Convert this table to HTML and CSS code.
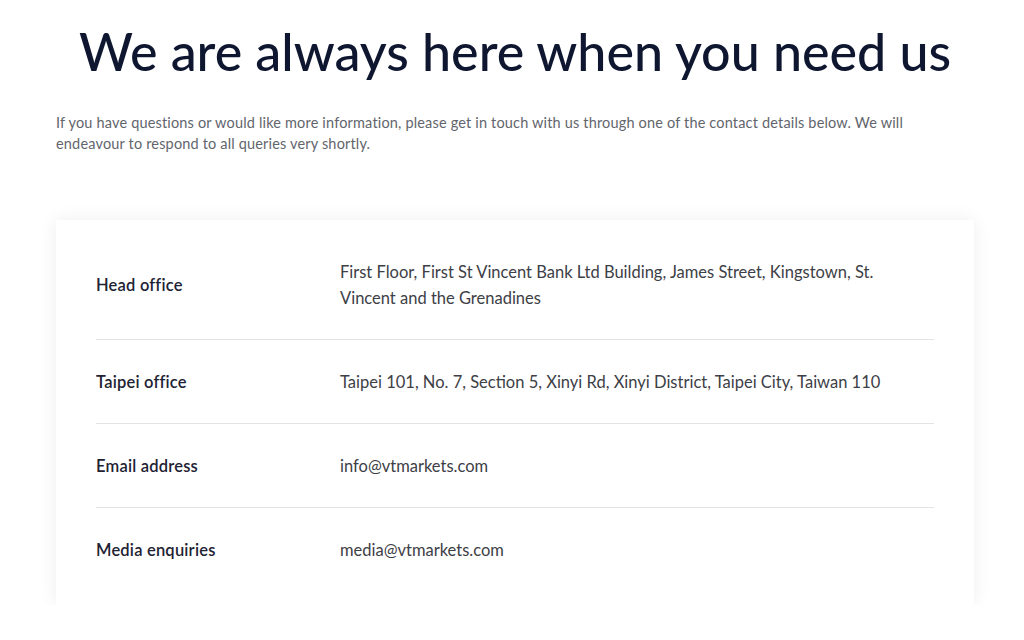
FILE: index.html
```html
<!DOCTYPE html>
<html lang="en">
<head>
<meta charset="utf-8">
<title>Contact us</title>
<link rel="stylesheet" href="styles.css">
</head>
<body>
<main class="page">
  <h1 class="title">We are always here when you need us</h1>
  <p class="intro">If you have questions or would like more information, please get in touch with us through one of the contact details below. We will endeavour to respond to all queries very shortly.</p>
  <section class="card">
    <div class="row">
      <div class="label">Head office</div>
      <div class="value">First Floor, First St Vincent Bank Ltd Building, James Street, Kingstown, St. Vincent and the Grenadines</div>
    </div>
    <div class="row">
      <div class="label">Taipei office</div>
      <div class="value">Taipei 101, No. 7, Section 5, Xinyi Rd, Xinyi District, Taipei City, Taiwan 110</div>
    </div>
    <div class="row">
      <div class="label">Email address</div>
      <div class="value">info@vtmarkets.com</div>
    </div>
    <div class="row">
      <div class="label">Media enquiries</div>
      <div class="value">media@vtmarkets.com</div>
    </div>
  </section>
</main>
</body>
</html>
```
FILE: styles.css
```css
* { box-sizing: border-box; }
html, body { margin: 0; padding: 0; background: #ffffff; }
body { font-family: Lato, "Open Sans", Arial, sans-serif; color: #1b2133; }
.page {
  width: 918px;
  margin-left: 56px;
  padding-top: 18px;
}
.title {
  margin: 0;
  text-align: center;
  font-size: 52px;
  font-weight: 500;
  line-height: 66px;
  color: #0e1630;
}
.intro {
  margin: 28px 0 0 0;
  width: 870px;
  font-size: 14.5px;
  letter-spacing: 0.17px;
  line-height: 21px;
  color: #62656c;
}
.card {
  margin-top: 66px;
  background: #fff;
  box-shadow: 0 0 18px rgba(0,0,0,0.07);
  padding: 10px 40px 14px 40px;
}
.row {
  display: flex;
  align-items: center;
  padding: 28.5px 0;
  border-bottom: 1px solid #e3e3e3;
}
.row:last-child { border-bottom: none; }
.label {
  width: 244px;
  flex: none;
  font-size: 16.5px;
  letter-spacing: 0.2px;
  line-height: 26px;
  font-weight: 600;
  color: #1e2233;
}
.value {
  flex: 1;
  font-size: 16.5px;
  letter-spacing: 0;
  line-height: 26px;
  color: #3d4046;
  padding-right: 50px;
}
```
